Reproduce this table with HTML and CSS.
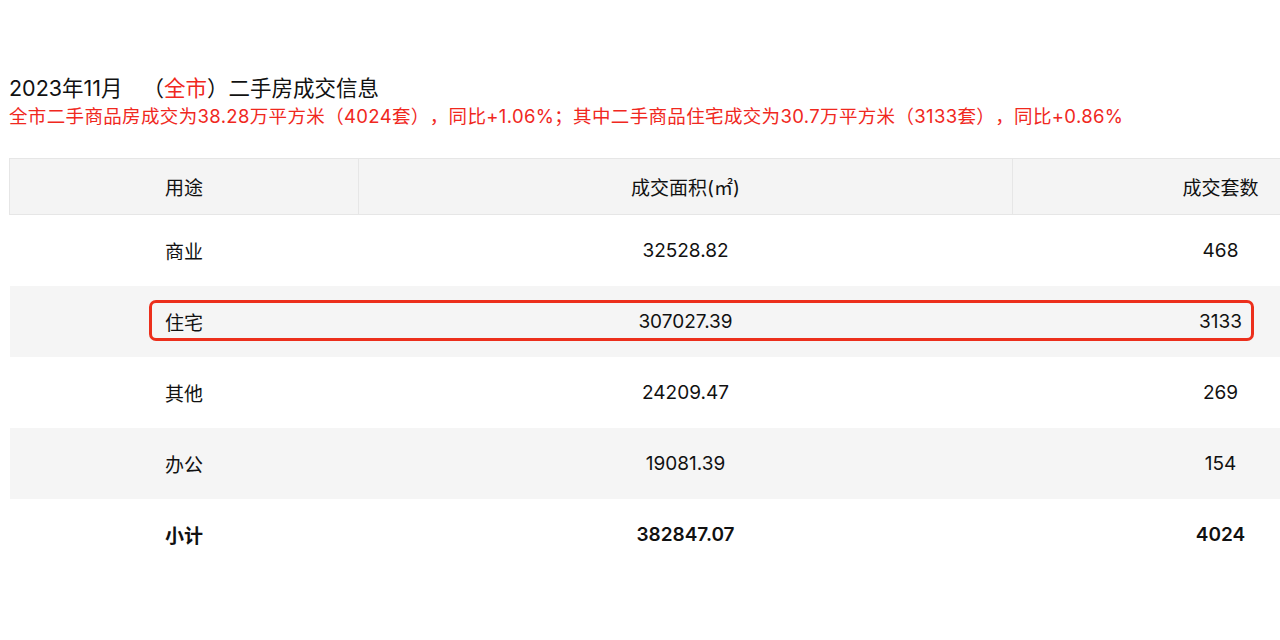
FILE: index.html
```html
<!DOCTYPE html>
<html lang="zh">
<head>
<meta charset="utf-8">
<link rel="stylesheet" href="styles.css">
</head>
<body>
<div class="page">
  <h1 class="title">2023年11月<span class="area">（<span class="red">全市</span>）</span>二手房成交信息</h1>
  <p class="summary">全市二手商品房成交为38.28万平方米（4024套），同比+1.06%；其中二手商品住宅成交为30.7万平方米（3133套），同比+0.86%</p>
  <div class="table-wrap">
    <table class="data">
      <colgroup>
        <col class="c1"><col class="c2"><col class="c3">
      </colgroup>
      <thead>
        <tr><th>用途</th><th>成交面积(㎡)</th><th>成交套数</th></tr>
      </thead>
      <tbody>
        <tr><td>商业</td><td>32528.82</td><td>468</td></tr>
        <tr class="stripe"><td>住宅</td><td>307027.39</td><td>3133</td></tr>
        <tr><td>其他</td><td>24209.47</td><td>269</td></tr>
        <tr class="stripe"><td>办公</td><td>19081.39</td><td>154</td></tr>
        <tr class="total"><td>小计</td><td>382847.07</td><td>4024</td></tr>
      </tbody>
    </table>
    <div class="highlight"></div>
  </div>
</div>
</body>
</html>
```

FILE: styles.css
```css
html, body {
  margin: 0;
  padding: 0;
  background: #fff;
  overflow: hidden;
}
body {
  font-family: "Inter", "Noto Sans CJK SC", sans-serif;
  color: #111;
  text-spacing-trim: space-all;
}
.page {
  padding: 74px 0 0 9px;
  width: 1500px;
}
.title {
  margin: 0;
  font-size: 21.5px;
  font-weight: normal;
  line-height: 28px;
  color: #111;
}
.area {
  margin-left: 20px;
}
.red {
  color: #f0281e;
}
.summary {
  margin: 1px 0 0 0;
  font-size: 18.5px;
  letter-spacing: 0.35px;
  line-height: 26px;
  color: #f0281e;
  white-space: nowrap;
}
.table-wrap {
  position: relative;
  margin-top: 29px;
  width: 1419px;
}
.data {
  width: 1419px;
  border-collapse: collapse;
  table-layout: fixed;
  font-size: 19px;
}
.c1 { width: 349px; }
.c2 { width: 654px; }
.c3 { width: 416px; }
.data th {
  height: 55px;
  background: #f4f4f4;
  border: 1px solid #e6e6e6;
  font-weight: normal;
  text-align: center;
  padding: 0;
  color: #111;
}
.data td {
  height: 71px;
  text-align: center;
  padding: 0;
  color: #111;
}
.data tr.stripe td {
  background: #f5f5f5;
}
.data tr.total td {
  font-weight: 600;
}
.highlight {
  position: absolute;
  left: 140px;
  top: 142px;
  width: 1099px;
  height: 35px;
  border: 3px solid #ec2f1c;
  border-radius: 7px;
}
```
